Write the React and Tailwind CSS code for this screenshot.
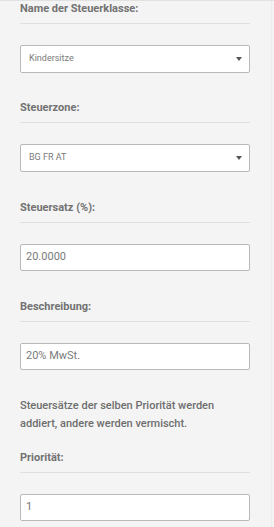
import React from "react";

const font = { fontFamily: "Roboto, 'Noto Sans', sans-serif" };

function Label({ children }) {
  return (
    <div className="text-[11px] leading-[16px] font-bold text-[#727272]">{children}</div>
  );
}

function Divider() {
  return <div className="h-px bg-[#dfdfdf] mt-[6px]" />;
}

function Select({ value }) {
  return (
    <div className="mt-[21px] h-[28px] border border-[#b9b9b9] bg-white rounded-[2px] flex items-center justify-between pl-[8px] pr-[7px]">
      <span className="text-[9px] text-[#7a7a7a]">{value}</span>
      <span className="w-0 h-0 border-l-[3.5px] border-r-[3.5px] border-t-[4px] border-l-transparent border-r-transparent border-t-[#555]" />
    </div>
  );
}

function Input({ value }) {
  return (
    <div className="mt-[21px] h-[27px] border border-[#b9b9b9] bg-white rounded-[2px] flex items-center pl-[5px]">
      <span className="text-[11px] text-[#7a7a7a]">{value}</span>
    </div>
  );
}

export default function App() {
  return (
    <div style={font} className="w-[274px] h-[527px] bg-[#f4f4f4] border-t border-[#e2e2e2] overflow-hidden flex">
      <div className="w-[272px] border-r border-[#ececec] px-[20px] pr-[21px] flex flex-col">
        <Label>Name der Steuerklasse:</Label>
        <Divider />
        <Select value="Kindersitze" />
        <div className="mt-[27px]">
          <Label>Steuerzone:</Label>
        </div>
        <Divider />
        <Select value="BG FR AT" />
        <div className="mt-[28px]">
          <Label>Steuersatz (%):</Label>
        </div>
        <Divider />
        <Input value="20.0000" />
        <div className="mt-[28px]">
          <Label>Beschreibung:</Label>
        </div>
        <Divider />
        <Input value="20% MwSt." />
        <div className="mt-[27px] text-[11px] leading-[18px] font-medium text-[#6e6e6e]">
          Steuersätze der selben Priorität werden addiert, andere werden vermischt.
        </div>
        <div className="mt-[17px]">
          <Label>Priorität:</Label>
        </div>
        <Divider />
        <Input value="1" />
      </div>
    </div>
  );
}
